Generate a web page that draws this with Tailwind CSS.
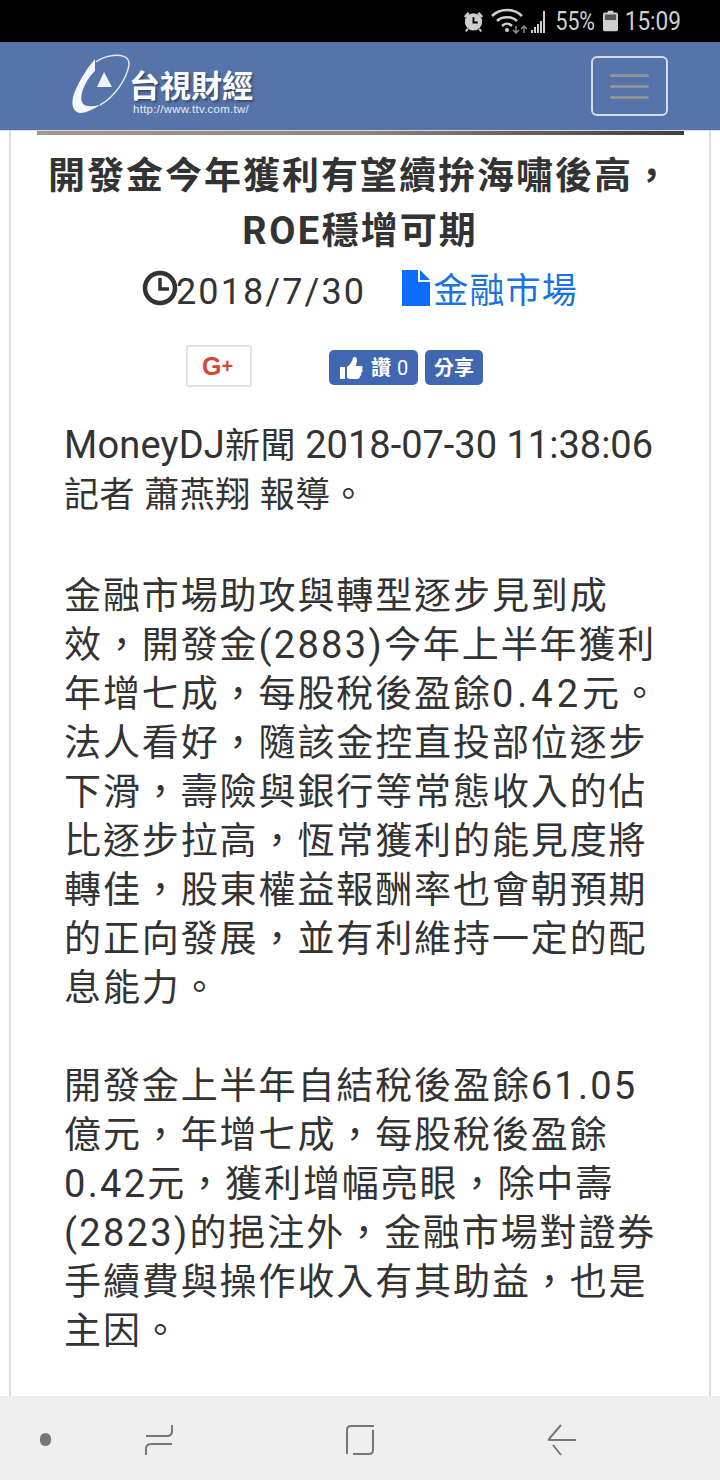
<!DOCTYPE html>
<html lang="zh-Hant">
<head>
    <meta charset="UTF-8">
    <meta name="viewport" content="width=device-width, initial-scale=1.0">
    <title>台視財經</title>
    <script src="https://cdn.jsdelivr.net/npm/@tailwindcss/browser@4"></script>
</head>
<body class="w-[720px] h-[1480px] overflow-hidden flex flex-col bg-white font-['Roboto','Noto_Sans_CJK_TC',sans-serif]">
    <!-- Status bar -->
    <div class="h-[42px] shrink-0 bg-black flex items-center justify-end pr-[39px] text-[#cfcfcf]">
        <svg class="w-[23px] h-[24px] mr-[6px]" viewBox="0 0 24 24" fill="#cfcfcf">
            <path d="M2 7 6 2.5 8 4.5 4 8.5ZM22 7 18 2.5 16 4.5 20 8.5Z"/>
            <circle cx="12" cy="13" r="9"/>
            <path d="M6 20 4 23M18 20 20 23" stroke="#cfcfcf" stroke-width="2"/>
            <path d="M12 8v5.5h4.5" fill="none" stroke="#000" stroke-width="2"/>
        </svg>
        <svg class="w-[54px] h-[26px] mr-[10px]" viewBox="0 0 54 26" fill="none" stroke="#cfcfcf">
            <path d="M1 8C9 0 23 0 31 8" stroke-width="2.5"/>
            <path d="M6 13C11 8 21 8 26 13" stroke-width="2.5"/>
            <path d="M11 18C14 15 18 15 21 18" stroke-width="2.5"/>
            <circle cx="16" cy="22" r="2" fill="#cfcfcf" stroke="none"/>
            <path d="M25 18v7M22 22l3 3 3-3M33 25v-7M30 21l3-3 3 3" stroke-width="1.5" stroke="#8a8a8a"/>
            <path d="M41 25v-3M44 25v-6M47 25v-9M50 25v-12M53 25V3" stroke-width="2"/>
        </svg>
        <span class="w-[40px] flex justify-end text-[26px] leading-none mr-[8px] scale-x-[.82] origin-right whitespace-nowrap">55%</span>
        <svg class="w-[15px] h-[22px] mr-[8px]" viewBox="0 0 16 22">
            <path d="M5 0h6v2h3a2 2 0 0 1 2 2v16a2 2 0 0 1-2 2H2a2 2 0 0 1-2-2V4a2 2 0 0 1 2-2h3Z" fill="#cfcfcf"/>
            <rect x="2" y="4" width="12" height="6" fill="#555"/>
        </svg>
        <span class="w-[55px] flex justify-end text-[26px] leading-none scale-x-[.87] origin-right whitespace-nowrap">15:09</span>
    </div>

    <!-- Header -->
    <header class="h-[89px] shrink-0 bg-[#5674a9] border-b border-[#d5dce8] flex items-center justify-between pl-[70px] pr-[52px]">
        <div class="flex items-start">
            <svg class="w-[62px] h-[64px] -mt-[2px]" viewBox="0 0 62 64">
                <path d="M25 6 25 18C17 25 9 41 12 49 14 54 20 54 30 52 22 57 12 62 7 59 1 56 1 46 6 36 11 25 18 14 25 6Z" fill="#f4f6fa"/>
                <path d="M30 52C45 44 57 25 59 12 60 3 50 1 40 3 34 4 30 6 26 9" fill="none" stroke="#e6ebf3" stroke-width="1.5"/>
                <path d="M34 19 42 34H27Z" fill="#eef1f6"/>
            </svg>
            <div class="flex flex-col items-center ml-[-3px] mt-[12px]">
                <span class="text-[31px] leading-[34px] font-bold text-white [text-shadow:2px_2px_2px_rgba(40,50,80,0.6)] font-['Noto_Sans_CJK_TC',sans-serif]">台視財經</span>
                <span class="mt-[2px] text-[11.4px] leading-[12px] text-[#e8ecf4] tracking-[0.3px] font-['Liberation_Sans',sans-serif]">http://www.ttv.com.tw/</span>
            </div>
        </div>
        <button class="w-[77px] h-[60px] rounded-[6px] border-2 border-[#d5dce8] flex flex-col items-center justify-center gap-[8px]">
            <span class="w-[39px] h-[3px] rounded-sm bg-[#8f9396]"></span>
            <span class="w-[39px] h-[3px] rounded-sm bg-[#8f9396]"></span>
            <span class="w-[39px] h-[3px] rounded-sm bg-[#8f9396]"></span>
        </button>
    </header>

    <!-- Article -->
    <main class="flex-1 min-h-0 overflow-hidden mx-[9px] border-x-2 border-[#dedede]">
        <div class="h-[4px] ml-[26px] mr-[25px] bg-gradient-to-r from-[#a39a8c] via-[#8d867b] to-[#3f3f3f]"></div>
        <h1 class="mt-[15px] px-[16px] text-center text-[37px] leading-[54px] tracking-[2px] font-bold text-[#333] whitespace-nowrap">開發金今年獲利有望續拚海嘯後高，<br><span class="text-[38px] tracking-[2.5px]">ROE</span>穩增可期</h1>
        <div class="mt-[6px] flex items-center justify-center h-[54px]">
            <svg class="w-[36px] h-[36px] -mr-[2px] mb-[8px]" viewBox="0 0 36 36" fill="none" stroke="#333">
                <circle cx="18" cy="18" r="15" stroke-width="4.5"/>
                <path d="M18 8v11h9" stroke-width="3.5"/>
            </svg>
            <span class="text-[36px] tracking-[2.1px] text-[#333]">2018/7/30</span>
            <svg class="w-[28px] h-[36px] ml-[36px] mr-[3px] mb-[8px]" viewBox="0 0 28 36" fill="#0d6efd">
                <path d="M0 0h16v12h12v24H0Z"/>
                <path d="M18 0 28 10H18Z"/>
            </svg>
            <span class="text-[35px] tracking-[1.2px] text-[#1a73e0]">金融市場</span>
        </div>
        <div class="mt-[26px] flex items-start pl-[175px]">
            <div class="w-[66px] h-[42px] pr-[3px] rounded-[3px] border-2 border-[#e2e2e2] flex items-center justify-center text-[#d34836] text-[25px] leading-none font-bold font-['Liberation_Sans',sans-serif]">G<span class="text-[20px]">+</span></div>
            <div class="ml-[77px] mt-[5px] w-[89px] h-[35px] rounded-[5px] bg-[#4267b2] flex items-center justify-center text-white text-[20px] font-bold">
                <svg class="w-[24px] h-[24px] mr-[8px]" viewBox="0 0 24 24" fill="#fff">
                    <path d="M1 11h5v12H1ZM8 11c3-2 5-5 6-9 1-2 4-1 4 2 0 2-1 4-1 6h5c2 0 2 2 1 3 1 1 1 3-1 4 1 1 0 3-1 3 0 2-1 3-3 3H11l-3-1Z"/>
                </svg>
                讚<span class="ml-[6px] font-normal">0</span>
            </div>
            <div class="ml-[7px] mt-[5px] w-[58px] h-[35px] rounded-[5px] bg-[#4267b2] flex items-center justify-center text-white text-[20px] font-bold">分享</div>
        </div>
        <article class="mt-[34px] pl-[53px] text-[37px] leading-[49px] tracking-[1.9px] text-[#333] whitespace-nowrap">
            <p class="text-[35px] tracking-[0.5px]"><span class="text-[38px] tracking-[0.2px]">MoneyDJ</span>新聞 <span class="text-[38px] tracking-[0px]">2018-07-30 11:38:06</span><br>記者 蕭燕翔 報導。</p>
            <p class="mt-[52px]">金融市場助攻與轉型逐步見到成<br>效，開發金<span class="text-[38px] tracking-[2.3px]">(2883)</span>今年上半年獲利<br>年增七成，每股稅後盈餘<span class="text-[38px] tracking-[4px]">0.42</span>元。<br>法人看好，隨該金控直投部位逐步<br>下滑，壽險與銀行等常態收入的佔<br>比逐步拉高，恆常獲利的能見度將<br>轉佳，股東權益報酬率也會朝預期<br>的正向發展，並有利維持一定的配<br>息能力。</p>
            <p class="mt-[49px]">開發金上半年自結稅後盈餘<span class="text-[38px] tracking-[2.2px]">61.05</span><br>億元，年增七成，每股稅後盈餘<br><span class="text-[38px] tracking-[2.3px]">0.42</span>元，獲利增幅亮眼，除中壽<br><span class="text-[38px] tracking-[2.3px]">(2823)</span>的挹注外，金融市場對證券<br>手續費與操作收入有其助益，也是<br>主因。</p>
        </article>
    </main>

    <!-- Navigation bar -->
    <nav class="h-[84px] shrink-0 bg-[#efefef] flex items-center pt-[3px]">
        <span class="ml-[40px] w-[11px] h-[13px] rounded-full bg-[#777]"></span>
        <svg class="ml-[93px] w-[30px] h-[44px]" viewBox="0 0 30 44" fill="none" stroke="#777" stroke-width="2">
            <path d="M2 18H23Q28 18 28 13V7"/>
            <path d="M28 26H7Q2 26 2 31V37"/>
        </svg>
        <svg class="ml-[171px] w-[30px] h-[44px]" viewBox="0 0 30 44" fill="none" stroke="#777" stroke-width="2">
            <path d="M2 36V12Q2 8 6 8H29"/>
            <path d="M28 12V32Q28 36 24 36H8"/>
        </svg>
        <svg class="ml-[172px] w-[30px] h-[44px]" viewBox="0 0 30 44" fill="none" stroke="#777" stroke-width="2">
            <path d="M14 7 2 21Q1 22 3 22H29"/>
            <path d="M6 27 14 37"/>
        </svg>
    </nav>
</body>
</html>
